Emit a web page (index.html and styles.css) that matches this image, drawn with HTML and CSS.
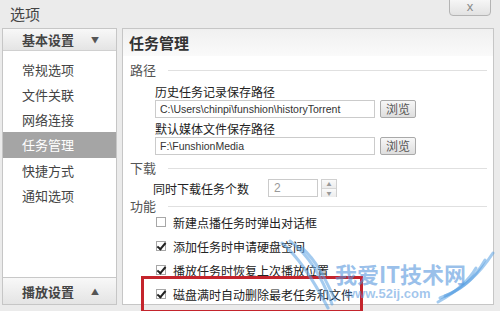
FILE: index.html
```html
<!DOCTYPE html>
<html lang="zh-CN">

<head>
  <meta charset="UTF-8">
  <title>选项</title>
  <link rel="stylesheet" href="styles.css">
</head>

<body>
  <div class='dialog'>
    <div class='titlebar'>
      <span class='title'>选项</span>
      <span class='close'>x</span>
    </div>

    <div class='main'>
      <div class='sidebar'>
        <div class='side-head'>基本设置 <span class='tri'>▼</span></div>
        <ul class='side-list'>
          <li>常规选项</li>
          <li>文件关联</li>
          <li>网络连接</li>
          <li class='active'>任务管理</li>
          <li>快捷方式</li>
          <li>通知选项</li>
        </ul>
        <div class='side-foot'>播放设置 <span class='tri'>▲</span></div>
      </div>

      <div class='panel'>
        <div class='panel-head'>任务管理</div>
        <div class='panel-body'>
          <div class='sec-title sec-path'>路径</div>
          <div class='field-label first'>历史任务记录保存路径</div>
          <div class='field-row'>
            <input class='path' type='text' value='C:\Users\chinpi\funshion\historyTorrent' readonly>
            <button class='browse'>浏览</button>
          </div>
          <div class='field-label'>默认媒体文件保存路径</div>
          <div class='field-row'>
            <input class='path' type='text' value='F:\FunshionMedia' readonly>
            <button class='browse'>浏览</button>
          </div>

          <div class='sec-title sec-dl'>下载</div>
          <div class='dl-row'>
            <span class='dl-label'>同时下载任务个数</span>
            <div class='spin'>
              <input class='spin-input' type='text' value='2' readonly>
              <div class='spin-btns'>
                <span class='spin-up'>▲</span>
                <span class='spin-down'>▼</span>
              </div>
            </div>
          </div>

          <div class='sec-title sec-fn'>功能</div>
          <div class='checks'>
            <div class='check'><span class='box'></span>新建点播任务时弹出对话框</div>
            <div class='check'><span class='box on'></span>添加任务时申请硬盘空间</div>
            <div class='check'><span class='box on'></span>播放任务时恢复上次播放位置</div>
            <div class='check marked'><span class='box on'></span>磁盘满时自动删除最老任务和文件</div>
          </div>
        </div>
      </div>
    </div>

    <div class='watermark'>
      <svg class='wings' width="220" height="75" viewBox="0 0 220 75">
        <path d="M2 5 C20 20 35 45 48 70" />
        <path d="M10 3 C30 18 42 40 52 66" />
        <path d="M22 10 C36 22 46 42 55 62" />
        <path d="M213 15 C200 35 185 50 165 58" />
        <path d="M205 22 C195 40 182 52 160 60" />
        <path d="M196 30 C188 44 176 54 158 64" />
      </svg>
      <div class='wm-name'>我爱IT技术网</div>
      <div class='wm-url'>www.52ij.com</div>
    </div>
  </div>
</body>
</html>
```

FILE: styles.css
```css
* {
  box-sizing: border-box;
}
body {
  margin: 0;
  background: #ebebeb;
  font-family: "Noto Sans CJK SC", "Noto Sans", sans-serif;
  font-size: 12px;
  color: #333;
}
.dialog {
  position: relative;
  width: 500px;
  height: 311px;
  overflow: hidden;
}
.titlebar {
  height: 28px;
  display: flex;
  align-items: center;
  justify-content: space-between;
  padding-left: 10px;
  padding-right: 9px;
}
.title {
  font-size: 15px;
  color: #444;
  line-height: 18px;
}
.close {
  align-self: flex-start;
  width: 42px;
  height: 17px;
  margin-top: -1px;
  border: 1px solid #b4b4b4;
  border-radius: 0 0 4px 4px;
  background: linear-gradient(#f6f6f6, #e2e2e2);
  color: #8a8a8a;
  font-family: "Liberation Sans", sans-serif;
  font-size: 13px;
  line-height: 13px;
  text-align: center;
}
.main {
  display: flex;
  gap: 5px;
  padding-left: 2px;
  height: 277px;
}

/* left menu */
.sidebar {
  width: 115px;
  display: flex;
  flex-direction: column;
  background: #fff;
  border: 1px solid #c6c6c6;
}
.side-head, .side-foot {
  display: flex;
  align-items: center;
  padding-left: 19px;
  font-weight: bold;
  font-size: 13px;
  color: #444;
  background: linear-gradient(#f8f8f8, #e4e4e4);
}
.side-head {
  height: 22px;
  border-bottom: 1px solid #d0d0d0;
}
.side-foot {
  height: 27px;
  margin-top: auto;
  border-top: 1px solid #c8c8c8;
}
.tri {
  font-size: 8px;
  color: #555;
  margin-left: 17px;
}
.side-list {
  list-style: none;
  margin: 0;
  padding: 6px 0 0;
}
.side-list li {
  height: 25px;
  line-height: 25px;
  padding-left: 19px;
  font-size: 13px;
  color: #444;
}
.side-list li.active {
  background: #a5a5a5;
  color: #fff;
  height: 26px;
}

/* right panel */
.panel {
  width: 372px;
  background: #fff;
  border: 1px solid #c6c6c6;
}
.panel-head {
  height: 27px;
  line-height: 27px;
  padding-left: 6px;
  font-weight: bold;
  font-size: 15px;
  color: #333;
  background: linear-gradient(#f0f0f0, #fafafa);
}
.panel-body {
  padding-left: 7px;
  padding-right: 6px;
}
.sec-title {
  display: flex;
  align-items: center;
  height: 14px;
  line-height: 14px;
  font-size: 13px;
  color: #555;
}
.sec-title::after {
  content: '';
  flex: 1;
  height: 1px;
  margin-left: 12px;
  background: #e0e0e0;
}
.sec-path { margin-top: 7px; }
.sec-dl { margin-top: 6px; }
.sec-fn { margin-top: 2px; }
.field-label {
  margin-left: 25px;
  margin-top: 3px;
  line-height: 16px;
  color: #222;
}
.field-label.first { margin-top: 7px; }
.field-row {
  display: flex;
  gap: 5px;
  margin-left: 25px;
  height: 18px;
}
.path {
  width: 220px;
  height: 18px;
  margin: 0;
  padding: 0 4px;
  border: 1px solid #cbcbcb;
  font-family: "Liberation Sans", sans-serif;
  font-size: 10.5px;
  color: #333;
  outline: none;
}
.browse {
  width: 36px;
  height: 18px;
  padding: 0;
  border: 1px solid #a9a9a9;
  border-radius: 2px;
  background: linear-gradient(#f7f7f7, #dedede);
  font-family: "Noto Sans CJK SC", sans-serif;
  font-size: 12px;
  line-height: 16px;
  color: #555;
}
.dl-row {
  display: flex;
  align-items: center;
  margin-left: 23px;
  margin-top: 4px;
  height: 18px;
}
.dl-label {
  width: 115px;
  color: #222;
}
.spin {
  display: flex;
  gap: 3px;
}
.spin-input {
  width: 50px;
  height: 18px;
  margin: 0;
  padding: 0 5px;
  border: 1px solid #cbcbcb;
  font-family: "Liberation Sans", sans-serif;
  font-size: 12px;
  color: #999;
  outline: none;
}
.spin-btns {
  display: flex;
  flex-direction: column;
  width: 16px;
  height: 18px;
  border: 1px solid #d0d0d0;
}
.spin-btns span {
  flex: 1;
  font-size: 5px;
  line-height: 8px;
  text-align: center;
  color: #999;
  background: linear-gradient(#fafafa, #ececec);
}
.spin-up {
  border-bottom: 1px solid #d6d6d6;
}
.checks {
  margin-top: -3px;
  margin-left: 26px;
}
.check {
  position: relative;
  display: flex;
  align-items: center;
  gap: 7px;
  height: 24px;
  color: #222;
}
.box {
  position: relative;
  width: 10px;
  height: 10px;
  border: 1px solid #a7a7a7;
  background: #fff;
}
.box.on::after {
  content: '';
  position: absolute;
  left: 2px;
  top: -1px;
  width: 3px;
  height: 7px;
  border-right: 2px solid #222;
  border-bottom: 2px solid #222;
  transform: rotate(40deg);
}
.check.marked::after {
  content: '';
  position: absolute;
  left: -15px;
  top: -6px;
  width: 216px;
  height: 31px;
  border: 3px solid #c4242c;
}

/* site watermark */
.watermark {
  position: absolute;
  left: 280px;
  top: 238px;
  width: 220px;
  height: 75px;
  pointer-events: none;
}
.wings {
  position: absolute;
  left: 0;
  top: 0;
}
.wings path {
  fill: none;
  stroke: rgba(90, 160, 225, 0.55);
  stroke-width: 3;
  stroke-linecap: round;
}
.wm-name {
  position: absolute;
  left: 55px;
  top: 22px;
  font-size: 22px;
  font-weight: bold;
  line-height: 26px;
  color: rgba(85, 150, 220, 0.6);
}
.wm-url {
  position: absolute;
  left: 65px;
  top: 49px;
  font-family: "Liberation Sans", sans-serif;
  font-size: 13px;
  font-weight: bold;
  line-height: 14px;
  color: rgba(85, 150, 220, 0.55);
}
```
